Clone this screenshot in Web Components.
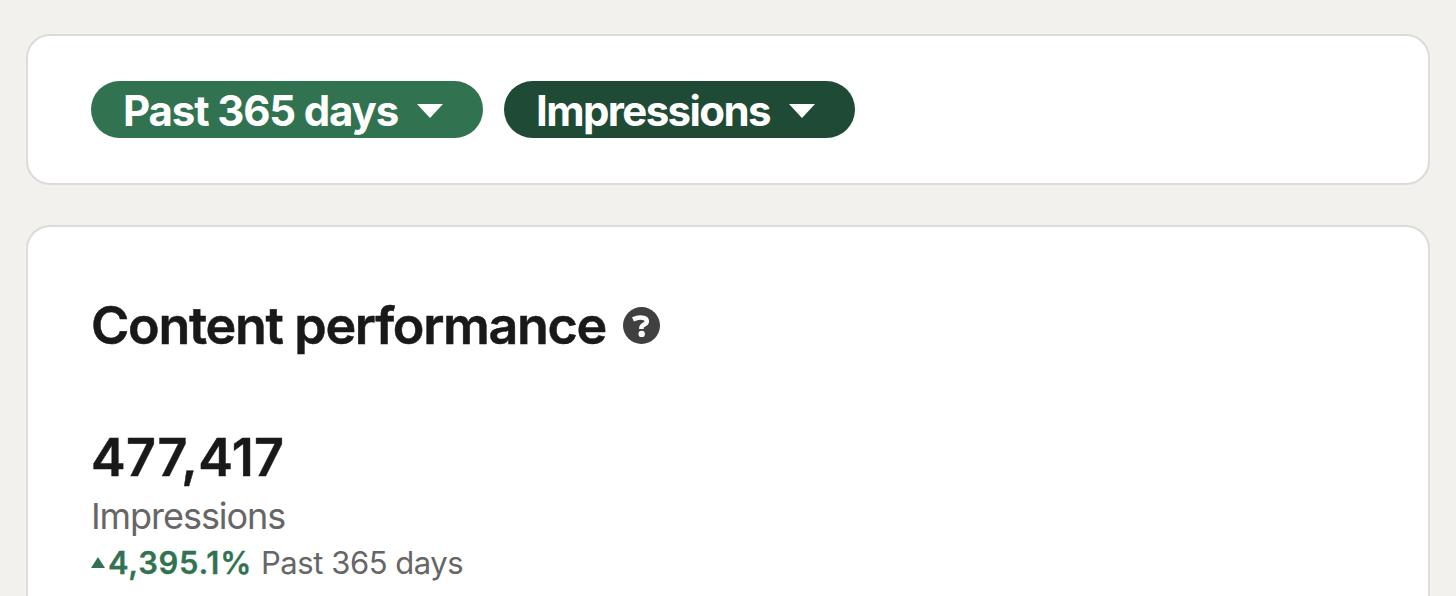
<!DOCTYPE html>
<html lang="en">
<head>
<meta charset="utf-8">
<title>Content performance</title>
<style>
  body {
    margin: 0;
    height: 596px;
    overflow: hidden;
    background: #f3f1ed;
    font-family: Inter, "Liberation Sans", sans-serif;
    font-optical-sizing: none;
    color: #191919;
  }
</style>
</head>
<body>
<analytics-page>
  <analytics-card class="filters">
    <filter-pill style="width: 392px">Past 365 days</filter-pill>
    <filter-pill active style="width: 351px; letter-spacing: -1.6px">Impressions</filter-pill>
  </analytics-card>
  <analytics-card class="performance">
    <card-title>Content performance<help-icon slot="icon"></help-icon></card-title>
    <metric-summary>
      <span slot="value">477,417</span>
      <span slot="label">Impressions</span>
      <span slot="change">4,395.1%</span>
      <span slot="period">Past 365 days</span>
    </metric-summary>
  </analytics-card>
</analytics-page>
<script>
  class AnalyticsPage extends HTMLElement {
    constructor() {
      super();
      this.attachShadow({ mode: 'open' });
      this.shadowRoot.innerHTML = `
        <style>
          :host {
            display: flex;
            flex-direction: column;
            box-sizing: border-box;
            height: 596px;
            gap: 40px;
            padding: 34px 26px 0;
          }
          ::slotted(.filters) { flex: none; height: 151px; padding: 45px 63px; }
          ::slotted(.performance) { flex: 1; padding: 67px 63px 0; }
        </style>
        <slot></slot>
      `;
    }
  }

  class AnalyticsCard extends HTMLElement {
    constructor() {
      super();
      this.attachShadow({ mode: 'open' });
      this.shadowRoot.innerHTML = `
        <style>
          :host {
            display: block;
            box-sizing: border-box;
            border: 2px solid #dddbd7;
            border-radius: 24px;
            background: #fff;
          }
          :host(.filters) { display: flex; gap: 21px; }
          :host(.performance) { border-bottom: 0; border-radius: 24px 24px 0 0; }
        </style>
        <slot></slot>
      `;
    }
  }

  class FilterPill extends HTMLElement {
    constructor() {
      super();
      this.attachShadow({ mode: 'open' });
      this.shadowRoot.innerHTML = `
        <style>
          :host {
            display: flex;
            align-items: center;
            justify-content: space-between;
            box-sizing: border-box;
            height: 57px;
            padding: 0 40px 0 32px;
            border-radius: 29px;
            background: #317351;
            color: #fff;
            font-size: 42px;
            font-weight: 700;
            line-height: 57px;
            letter-spacing: -1.15px;
            white-space: nowrap;
          }
          :host([active]) { background: #1f4a35; }
          span { padding-top: 2px; }
          svg { display: block; flex: none; margin-top: 2px; }
        </style>
        <span><slot></slot></span>
        <svg width="26" height="14" viewBox="0 0 26 14" fill="currentColor"><path d="M0 0h26L13 14z"/></svg>
      `;
    }
  }

  class CardTitle extends HTMLElement {
    constructor() {
      super();
      this.attachShadow({ mode: 'open' });
      this.shadowRoot.innerHTML = `
        <style>
          :host { display: flex; align-items: center; gap: 17px; height: 64px; }
          h2 {
            margin: 0;
            font-size: 52px;
            font-weight: 600;
            line-height: 64px;
            letter-spacing: -1.3px;
            white-space: nowrap;
            -webkit-text-stroke: .5px currentColor;
          }
        </style>
        <h2><slot></slot></h2>
        <slot name="icon"></slot>
      `;
    }
  }

  class HelpIcon extends HTMLElement {
    constructor() {
      super();
      this.attachShadow({ mode: 'open' });
      this.shadowRoot.innerHTML = `
        <style>
          :host { display: block; width: 37px; height: 37px; margin-bottom: 2px; }
          svg { display: block; }
        </style>
        <svg width="37" height="37" viewBox="0 0 37 37">
          <circle cx="18.5" cy="18.5" r="18.5" fill="#404040"/>
          <path d="M10 12.3c2.6-1.2 5-1.8 7.6-1.8 4 0 6.2 1.4 6.2 3.9 0 3.1-5.4 3.1-5.4 6.5v1" fill="none" stroke="#fff" stroke-width="4.6"/>
          <circle cx="18.7" cy="26.9" r="3.2" fill="#fff"/>
        </svg>
      `;
    }
  }

  class MetricSummary extends HTMLElement {
    constructor() {
      super();
      this.attachShadow({ mode: 'open' });
      this.shadowRoot.innerHTML = `
        <style>
          :host { display: block; margin-top: 67px; white-space: nowrap; }
          .value {
            font-size: 52px;
            font-weight: 600;
            line-height: 66px;
            letter-spacing: .4px;
            -webkit-text-stroke: .5px currentColor;
          }
          .label { font-size: 36px; line-height: 50px; letter-spacing: -1.05px; color: #666; }
          .trend {
            display: flex;
            align-items: center;
            margin-top: 1px;
            font-size: 31px;
            line-height: 42px;
            color: #666;
          }
          .change {
            margin: 0 9px 0 3px;
            font-weight: 600;
            letter-spacing: .7px;
            color: #317351;
            -webkit-text-stroke: .3px currentColor;
          }
          .period { letter-spacing: -.45px; }
          svg { display: block; flex: none; margin-bottom: 2px; }
        </style>
        <div class="value"><slot name="value"></slot></div>
        <div class="label"><slot name="label"></slot></div>
        <div class="trend">
          <svg width="14" height="11" viewBox="0 0 14 11"><path d="M0 11L7 0 14 11z" fill="#317351"/></svg>
          <span class="change"><slot name="change"></slot></span>
          <span class="period"><slot name="period"></slot></span>
        </div>
      `;
    }
  }

  customElements.define('analytics-page', AnalyticsPage);
  customElements.define('analytics-card', AnalyticsCard);
  customElements.define('filter-pill', FilterPill);
  customElements.define('card-title', CardTitle);
  customElements.define('help-icon', HelpIcon);
  customElements.define('metric-summary', MetricSummary);
</script>
</body>
</html>
